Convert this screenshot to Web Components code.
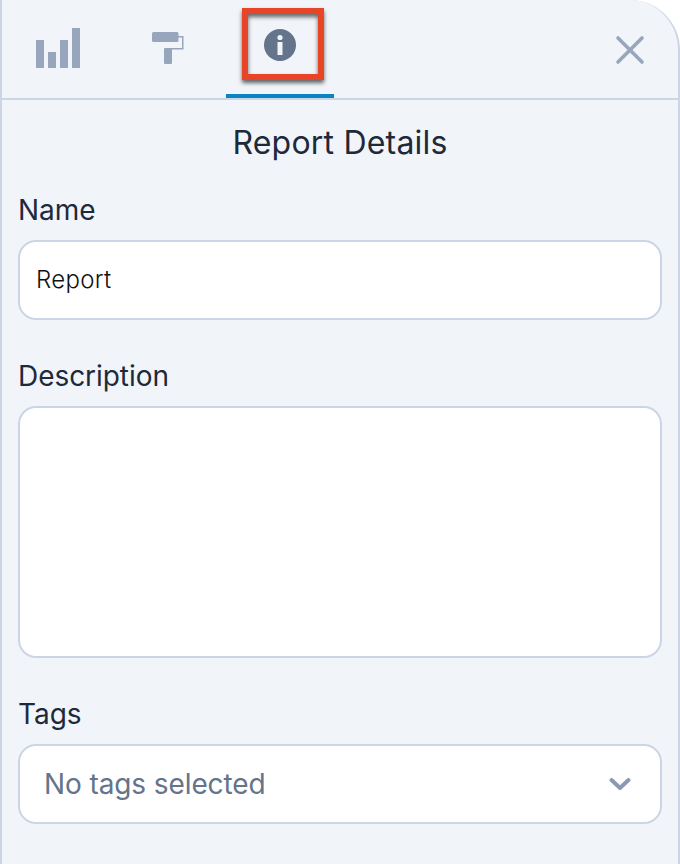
<!DOCTYPE html>
<html lang="en">
<head>
<meta charset="utf-8">
<title>Report Details</title>
<style>
  html, body { margin: 0; padding: 0; height: 100%; background: #fff; }
</style>
</head>
<body>
<report-panel>
  <panel-tabs slot="tabs">
    <tab-item style="--tab-ml: 2px">
      <svg width="44" height="40" viewBox="0 0 44 40" fill="#97a6bc"><rect x="0" y="12" width="8" height="28"/><rect x="12" y="24" width="8" height="16"/><rect x="24" y="12" width="8" height="28"/><rect x="36" y="0" width="8" height="40"/></svg>
    </tab-item>
    <tab-item style="--tab-ml: 6px">
      <svg style="margin-right: 8px" width="32" height="32" viewBox="0 0 32 32" fill="#97a6bc"><rect x="0" y="0" width="26.5" height="10" rx="1.5"/><path d="M26 4h5.500v13.500H18V16h12V5.500h-4z"/><rect x="12" y="16" width="8" height="16" rx="1"/></svg>
    </tab-item>
    <tab-item active>
      <svg width="32" height="32" viewBox="0 0 32 32"><circle cx="16" cy="16" r="16" fill="#64748b"/><circle cx="16" cy="8.500" r="2.600" fill="#f1f5f9"/><path d="M13.500 13h5v13h-5z" fill="#f1f5f9"/></svg>
    </tab-item>
    <svg slot="close" width="32" height="32" viewBox="0 0 32 32" fill="none" stroke="#97a6bc" stroke-width="3.600" stroke-linecap="round"><path d="M4 4l24 24M28 4L4 28"/></svg>
  </panel-tabs>
  <h-title>Report Details</h-title>
  <form-field label="Name" style="--gap-below: 38px"><text-box height="80">Report</text-box></form-field>
  <form-field label="Description" style="--gap-below: 38px"><text-box height="252"></text-box></form-field>
  <form-field label="Tags"><select-box>No tags selected</select-box></form-field>
</report-panel>
<script>
// Outer panel with the rounded corner and the side borders.
customElements.define('report-panel', class extends HTMLElement {
  constructor () {
    super()
    this.attachShadow({ mode: 'open' }).innerHTML = `
    <style>
      :host {
        display: block;
        box-sizing: border-box;
        width: 680px;
        height: 864px;
        overflow: hidden;
        background-color: #f1f5f9;
        border: 2px solid #cbd5e4;
        border-width: 0 2px;
        border-top-right-radius: 50px;
        font-family: Inter, "Liberation Sans", sans-serif;
        color: #1e293b;
      }
      #body { padding: 0 16px; }
    </style>
    <slot name="tabs"></slot>
    <div id="body"><slot></slot></div>`
  }
})

// Tab bar across the top, close button on the right.
customElements.define('panel-tabs', class extends HTMLElement {
  constructor () {
    super()
    this.attachShadow({ mode: 'open' }).innerHTML = `
    <style>
      :host {
        display: flex;
        align-items: stretch;
        box-sizing: border-box;
        height: 100px;
        border-bottom: 2px solid #cbd5e4;
        position: relative;
      }
      #close {
        margin-left: auto;
        margin-right: 32px;
        align-self: center;
        display: flex;
        margin-top: 2px;
      }
      /* annotation drawn over the active tab */
      #mark {
        position: absolute;
        left: 240px;
        top: 8px;
        width: 82px;
        height: 72px;
        box-sizing: border-box;
        border: 6px solid #e84428;
        box-shadow: 0 3px 4px rgba(0, 0, 0, .6), inset 0 3px 4px rgba(0, 0, 0, .6);
      }
    </style>
    <slot></slot>
    <div id="close"><slot name="close"></slot></div>
    <div id="mark"></div>`
  }
})

customElements.define('tab-item', class extends HTMLElement {
  constructor () {
    super()
    this.attachShadow({ mode: 'open' }).innerHTML = `
    <style>
      :host {
        display: flex;
        align-items: center;
        justify-content: center;
        box-sizing: border-box;
        width: 108px;
        height: 98px;
        margin-left: var(--tab-ml, 0);
        padding-bottom: 2px;
      }
      :host([active]) {
        border-bottom: 4px solid #0b84c6;
        padding-bottom: 4px;
      }
    </style>
    <slot></slot>`
  }
})

customElements.define('h-title', class extends HTMLElement {
  constructor () {
    super()
    this.attachShadow({ mode: 'open' }).innerHTML = `
    <style>
      :host {
        display: block;
        height: 92px;
        box-sizing: border-box;
        padding-top: 24px;
        text-align: center;
        font-size: 32px;
        letter-spacing: .2px;
        line-height: 38px;
        font-weight: 400;
      }
    </style>
    <slot></slot>`
  }
})

customElements.define('form-field', class extends HTMLElement {
  constructor () {
    super()
    this.attachShadow({ mode: 'open' }).innerHTML = `
    <style>
      :host { display: block; margin-bottom: var(--gap-below, 0); }
      label {
        display: block;
        height: 48px;
        font-size: 28px;
        line-height: 36px;
        letter-spacing: -.05px;
      }
    </style>
    <label></label>
    <slot></slot>`
    this.shadowRoot.querySelector('label').textContent = this.getAttribute('label')
  }
})

customElements.define('text-box', class extends HTMLElement {
  constructor () {
    super()
    this.attachShadow({ mode: 'open' }).innerHTML = `
    <style>
      :host {
        display: block;
        box-sizing: border-box;
        background-color: #fff;
        border: 2px solid #cbd5e4;
        border-radius: 18px;
        padding: 0 16px;
        font-size: 24px;
        font-weight: 300;
        letter-spacing: .3px;
        color: #111;
      }
    </style>
    <slot></slot>`
  }

  connectedCallback () {
    const height = this.getAttribute('height')
    this.style.height = `${height}px`
    this.style.lineHeight = `${height - 5}px`
  }
})

customElements.define('select-box', class extends HTMLElement {
  constructor () {
    super()
    this.attachShadow({ mode: 'open' }).innerHTML = `
    <style>
      :host {
        display: flex;
        align-items: center;
        justify-content: space-between;
        box-sizing: border-box;
        height: 80px;
        background-color: #fff;
        border: 2px solid #cbd5e4;
        border-radius: 18px;
        padding: 0 29px 0 24px;
        font-size: 28px;
        letter-spacing: -.1px;
        color: #64748b;
      }
      svg { display: block; }
    </style>
    <span><slot></slot></span>
    <svg width="22" height="14" viewBox="0 0 22 14" fill="none" stroke="#8b9ab1" stroke-width="4" stroke-linecap="round" stroke-linejoin="round"><path d="M2.500 3L11 11l8.500-8"/></svg>`
  }
})
</script>
</body>
</html>
